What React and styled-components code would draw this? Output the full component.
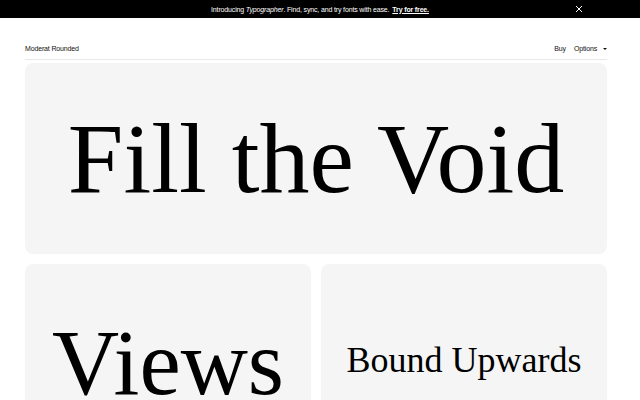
import React from "react";
import styled, { createGlobalStyle } from "styled-components";

const GlobalStyle = createGlobalStyle`
  html, body {
    margin: 0;
    padding: 0;
    background: #fff;
    font-family: "Liberation Sans", Arial, sans-serif;
    color: #111;
  }
`;

const Banner = styled.div`
  height: 18px;
  background: #000;
  color: #fff;
  display: flex;
  align-items: center;
  justify-content: center;
  position: relative;
  font-size: 7px;
  letter-spacing: -0.15px;
`;

const BannerLink = styled.a`
  color: #fff;
  font-weight: bold;
  text-decoration: underline;
  margin-left: 3px;
`;

const Close = styled.button`
  position: absolute;
  right: 56px;
  top: 4px;
  width: 10px;
  height: 10px;
  padding: 0;
  border: none;
  background: none;
  display: flex;
  align-items: center;
  justify-content: center;
`;

const Page = styled.div`
  padding: 0 33px 0 25px;
`;

const Header = styled.header`
  display: flex;
  justify-content: space-between;
  align-items: center;
  height: 42px;
  box-sizing: border-box;
  padding-top: 19px;
  border-bottom: 1px solid #e8e8e8;
  font-size: 7px;
  letter-spacing: -0.15px;
`;

const Nav = styled.nav`
  display: flex;
  align-items: center;
  gap: 8px;
`;

const Caret = styled.span`
  display: inline-block;
  width: 0;
  height: 0;
  border-left: 2px solid transparent;
  border-right: 2px solid transparent;
  border-top: 2.5px solid #111;
  margin-left: 6px;
  vertical-align: middle;
`;

const Grid = styled.div`
  display: grid;
  grid-template-columns: 1fr 1fr;
  gap: 10px;
  padding-top: 3px;
`;

const Card = styled.div`
  grid-column: ${(p) => (p.$wide ? "1 / -1" : "auto")};
  height: ${(p) => p.$h}px;
  background: #f5f5f5;
  border-radius: 8px;
  display: flex;
  align-items: center;
  justify-content: center;
  font-family: "Liberation Serif", "Times New Roman", serif;
  font-size: ${(p) => p.$size}px;
  line-height: 1;
  color: #000;
  white-space: nowrap;
  overflow: hidden;
`;

const Sample = styled.span`
  position: relative;
  top: ${(p) => p.$shift || 0}px;
`;

export default function App() {
  return (
    <>
      <GlobalStyle />
      <Banner>
        <span>
          Introducing <i>Typographer</i>. Find, sync, and try fonts with ease.
        </span>
        <BannerLink href="#">Try for free.</BannerLink>
        <Close aria-label="Close">
          <svg width="8" height="8" viewBox="0 0 8 8">
            <path d="M1 1L7 7M7 1L1 7" stroke="#fff" strokeWidth="1" />
          </svg>
        </Close>
      </Banner>
      <Page>
        <Header>
          <span>Moderat Rounded</span>
          <Nav>
            <span>Buy</span>
            <span>
              Options
              <Caret />
            </span>
          </Nav>
        </Header>
        <Grid>
          <Card $wide $h={191} $size={100}>
            <Sample $shift={0}>Fill the Void</Sample>
          </Card>
          <Card $h={160} $size={93}>
            <Sample $shift={18}>Views</Sample>
          </Card>
          <Card $h={160} $size={36}>
            <Sample $shift={16}>Bound Upwards</Sample>
          </Card>
        </Grid>
      </Page>
    </>
  );
}
